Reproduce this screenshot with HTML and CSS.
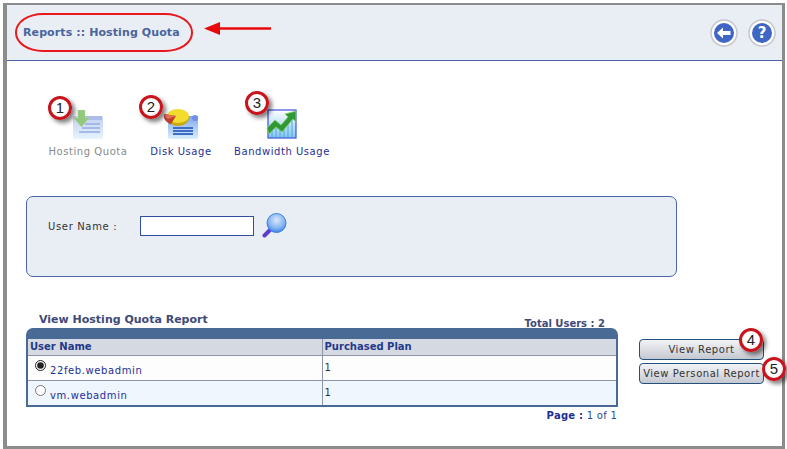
FILE: index.html
```html
<!DOCTYPE html>
<html lang="en">
<head>
<meta charset="utf-8">
<title>Reports :: Hosting Quota</title>
<link rel="stylesheet" href="styles.css">
</head>
<body>
<div class="frame">
  <header class="head">
    <h1 class="title">Reports :: Hosting Quota</h1>
    <div class="head-btns">
      <svg class="round" width="28" height="28" viewBox="0 0 28 28"><circle cx="14" cy="14" r="13" fill="#fff" stroke="#c4c6cc" stroke-width="1.5"/><circle cx="14" cy="14" r="10" fill="#3f66c4"/><path d="M7 14l6-5.500V12h7.500v4H13v3.500z" fill="#fff"/></svg>
      <svg class="round" width="28" height="28" viewBox="0 0 28 28"><circle cx="14" cy="14" r="13" fill="#fff" stroke="#c4c6cc" stroke-width="1.5"/><circle cx="14" cy="14" r="10" fill="#3f66c4"/><text x="14" y="19" text-anchor="middle" class="qmark">?</text></svg>
    </div>
  </header>

  <nav class="tiles">
    <a class="tile tile-a muted">
      <svg width="32" height="30" viewBox="0 0 32 30" class="faded">
        <defs><linearGradient id="doc" x1="0" y1="0" x2="0" y2="1"><stop offset="0" stop-color="#b9c8ef"/><stop offset="1" stop-color="#e3f1fb"/></linearGradient></defs>
        <rect x="1" y="6" width="30" height="23" rx="2" fill="url(#doc)"/>
        <rect x="11" y="6" width="19" height="4" fill="#9fb0e6"/>
        <path d="M13 14h15M10 18h18M7 22h21" stroke="#7f9fe0" stroke-width="1.500"/>
        <path d="M6 0h7v8h4l-7.500 9L2 8h4z" fill="#7fbf62" stroke="#a8d79a" stroke-width=".5"/>
      </svg>
      <span>Hosting Quota</span>
    </a>
    <a class="tile tile-b">
      <svg width="36" height="32" viewBox="0 0 36 32">
        <defs><linearGradient id="doc2" x1="0" y1="0" x2="0" y2="1"><stop offset="0" stop-color="#7fa6ee"/><stop offset="1" stop-color="#d9effb"/></linearGradient></defs>
        <rect x="5" y="8" width="30" height="23" rx="2" fill="url(#doc2)"/>
        <circle cx="32" cy="10" r="3" fill="#6f8fe8"/>
        <path d="M10 20h20M10 23h20M10 26h20" stroke="#3f6fc4" stroke-width="1.800"/>
        <ellipse cx="15" cy="10" rx="11" ry="8" fill="#c9a90f"/>
        <ellipse cx="15" cy="8" rx="11" ry="7" fill="#f4dc2e"/>
        <path d="M1 6l12 2-5 8C3 15 0 10 1 6z" fill="#b8402c"/>
        <path d="M1 6l12 2-8 3C3 10 1 8 1 6z" fill="#e8705a"/>
      </svg>
      <span>Disk Usage</span>
    </a>
    <a class="tile tile-c">
      <svg width="32" height="32" viewBox="0 0 32 32">
        <defs><linearGradient id="doc3" x1="0" y1="0" x2="0" y2="1"><stop offset="0" stop-color="#fff"/><stop offset="1" stop-color="#7fc8f0"/></linearGradient></defs>
        <rect x="2" y="2" width="28" height="28" fill="url(#doc3)" stroke="#3f52e0" stroke-width="1.200"/>
        <path d="M6 29V18M10 29V15M14 29V19M18 29V17M22 29V12M26 29V9" stroke="#5aa4dc"/>
        <path d="M1 20l8-8 6 5 7-8-3-3 11-3v11l-3-3-11 13-6-5-7 7z" fill="#2f9a35" stroke="#8fd070" stroke-width=".8"/>
      </svg>
      <span>Bandwidth Usage</span>
    </a>
  </nav>

  <form class="panel">
    <label class="field-label" for="un">User Name :</label>
    <input id="un" class="field" type="text">
    <svg class="lens" width="25" height="25" viewBox="0 0 25 25">
      <defs><radialGradient id="gl" cx=".5" cy=".35" r=".7"><stop offset="0" stop-color="#dbe8fb"/><stop offset=".6" stop-color="#86b4f2"/><stop offset="1" stop-color="#2f78e6"/></radialGradient></defs>
      <path d="M2.500 22.500l6-6" stroke="#5b3fc8" stroke-width="4" stroke-linecap="round"/>
      <circle cx="14.500" cy="10" r="9.500" fill="url(#gl)" stroke="#3a82e8"/>
    </svg>
  </form>

  <section class="report">
    <div class="report-main">
      <div class="report-top">
        <h2 class="report-title">View Hosting Quota Report</h2>
        <span class="total">Total Users : 2</span>
      </div>
      <div class="grid-cap"></div>
      <table class="grid">
        <thead>
          <tr><th class="col-a">User Name</th><th>Purchased Plan</th></tr>
        </thead>
        <tbody>
          <tr class="r1">
            <td><span class="pick"><input type="radio" name="u" checked><a>22feb.webadmin</a></span></td>
            <td>1</td>
          </tr>
          <tr class="r2">
            <td><span class="pick"><input type="radio" name="u"><a>vm.webadmin</a></span></td>
            <td>1</td>
          </tr>
        </tbody>
      </table>
      <div class="pager"><b>Page :</b> 1 of 1</div>
    </div>
    <div class="actions">
      <button type="button" class="btn">View Report</button>
      <button type="button" class="btn">View Personal Report</button>
    </div>
  </section>
</div>

<div class="oval"></div>
<svg class="arrow" width="68" height="16" viewBox="0 0 68 16"><path d="M67 7.500H14" stroke="#e8080c" stroke-width="2.500"/><path d="M0 7.500L16 1v13z" fill="#e8080c"/></svg>
<span class="badge b1">1</span>
<span class="badge b2">2</span>
<span class="badge b3">3</span>
<span class="badge b4">4</span>
<span class="badge b5">5</span>
</body>
</html>
```
FILE: styles.css
```css
* { box-sizing: border-box; }
html, body { margin: 0; padding: 0; }
body {
  position: relative;
  width: 787px;
  height: 449px;
  overflow: hidden;
  background: #fff;
  font-family: "DejaVu Sans", Verdana, sans-serif;
  font-size: 10px;
  color: #333;
}
.frame {
  margin: 3px 2px 0 3px;
  height: 446px;
  border-style: solid;
  border-color: #8c8c8c;
  border-width: 2px 3px 3px 4px;
}
.head {
  height: 56px;
  background: #e9eef5;
  border-bottom: 1px solid #4a62ae;
  display: flex;
  align-items: center;
  justify-content: space-between;
  padding: 0 6px 0 16px;
}
.title {
  margin: 0;
  font-size: 11px;
  font-weight: bold;
  letter-spacing: .1px;
  color: #4a659c;
}
.head-btns { display: flex; gap: 10px; margin-top: 1px; }
.round { display: block; }
.qmark { font: bold 15px "DejaVu Sans", sans-serif; fill: #fff; }

.tiles {
  display: flex;
  align-items: flex-end;
  height: 97px;
  padding-left: 41px;
  color: #1e2f96;
}
.tile {
  display: flex;
  flex-direction: column;
  align-items: center;
  gap: 6px;
}
.tile span { line-height: 12px; letter-spacing: .55px; white-space: nowrap; }
.tile svg { display: block; }
.tile-a { width: 80px; }
.tile-b { width: 80px; margin-left: 13px; }
.tile-c { width: 110px; margin-left: 6px; }
.muted { color: #8a8a8a; }
.faded { opacity: .85; }

.panel {
  margin: 38px 0 0 19px;
  width: 651px;
  height: 81px;
  background: #e9eef5;
  border: 1px solid #4a65a8;
  border-radius: 7px;
  display: flex;
  align-items: flex-start;
  padding: 16px 0 0 21px;
}
.field-label { margin-top: 8px; width: 92px; color: #333; letter-spacing: .65px; white-space: nowrap; }
.field {
  width: 114px;
  height: 20px;
  margin: 3px 9px 0 0;
  padding: 0;
  border: 1px solid #2f4fa0;
  background: #fff;
}
.lens { display: block; margin-left: -1px; }

.report {
  display: flex;
  margin: 36px 0 0 19px;
}
.report-main { width: 592px; }
.report-top {
  display: flex;
  justify-content: space-between;
  height: 15px;
  padding: 0 13px;
  color: #3e4a78;
  font-weight: bold;
}
.report-title { margin: 0; font-size: 11px; font-weight: bold; line-height: 14px; }
.total { font-size: 10px; line-height: 12px; padding-top: 5px; height: 15px; }
.grid-cap {
  height: 11px;
  background: #4a6a96;
  border-radius: 7px 7px 0 0;
}
.grid {
  width: 100%;
  border-collapse: collapse;
  table-layout: fixed;
  border: 2px solid #4a6a96;
  border-top: 0;
}
.grid th {
  height: 16px;
  padding: 0 2px;
  text-align: left;
  font-size: 10px;
  color: #1f3a8a;
  background: #d5d9e2;
  border-bottom: 1px solid #8c96a8;
  border-right: 1px solid #8c96a8;
}
.grid td {
  height: 25px;
  padding: 0 2px;
  border-right: 1px solid #8c96a8;
  border-bottom: 1px solid #8c96a8;
  font-size: 10px;
}
.grid tr > :last-child { border-right: 0; }
.grid tr:last-child td { border-bottom: 0; height: 26px; }
.col-a { width: 295px; }
.r1 { background: #fdfdfd; }
.r2 { background: #f0f6fd; }
.pick { display: flex; align-items: flex-start; padding-left: 5px; height: 21px; color: #1e2f96; letter-spacing: .6px; }
.pick input { width: 11px; height: 11px; margin: 3px 4px 0 0; accent-color: #222; }
.pick a { padding-top: 8px; }
.pager {
  text-align: right;
  padding: 3px 1px 0 0;
  font-size: 10px;
  letter-spacing: .25px;
  color: #2a4a9a;
  line-height: 12px;
}
.pager b { color: #1e2f96; }

.actions {
  display: flex;
  flex-direction: column;
  gap: 3px;
  margin: 26px 0 0 21px;
}
.btn {
  width: 125px;
  height: 21px;
  padding: 0;
  border: 1px solid #24507e;
  border-radius: 4px;
  background: linear-gradient(#f4f4f6, #c4c8d0);
  font: 10px "DejaVu Sans", Verdana, sans-serif;
  letter-spacing: .55px;
  color: #333;
}

.oval {
  position: absolute;
  left: 15px;
  top: 13px;
  width: 178px;
  height: 39px;
  border: 2px solid #e8181c;
  border-radius: 28px / 19px;
}
.arrow { position: absolute; left: 204px; top: 21px; }
.badge {
  position: absolute;
  width: 24px;
  height: 24px;
  border-radius: 50%;
  border: 3px solid #c8141c;
  background: radial-gradient(circle at 40% 35%, #fff 55%, #e6e0e0);
  box-shadow: 3px 3px 4px rgba(0,0,0,.5);
  font: 15px/18px "Liberation Sans", Arial, sans-serif;
  color: #222;
  text-align: center;
}
.b1 { left: 48px; top: 96px; }
.b2 { left: 139px; top: 95px; }
.b3 { left: 245px; top: 91px; }
.b4 { left: 739px; top: 328px; }
.b5 { left: 762px; top: 357px; }
```
